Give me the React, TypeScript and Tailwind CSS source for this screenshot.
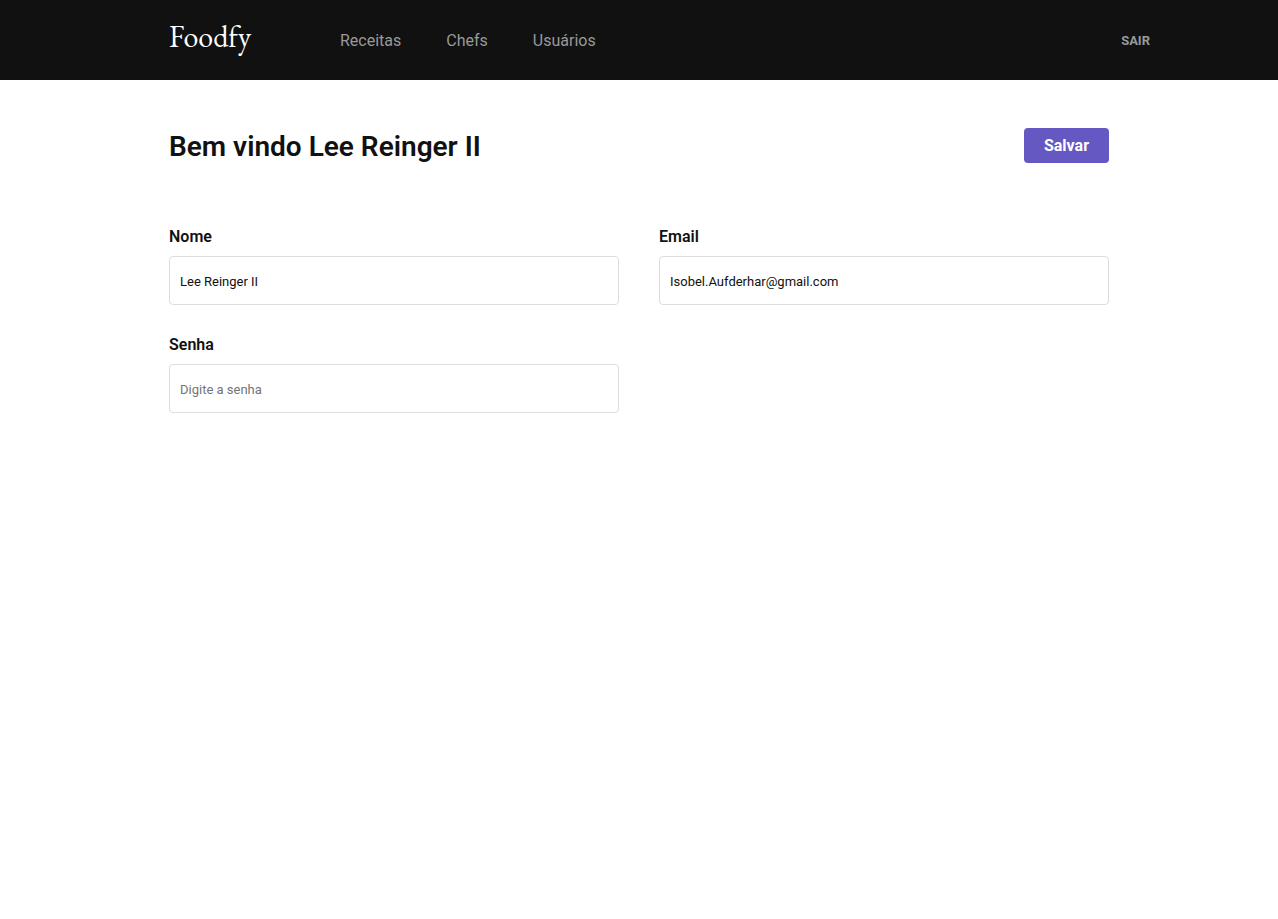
import React from "react";

type FieldProps = {
  id: string;
  label: string;
  type: string;
  value?: string;
  placeholder?: string;
};

function Field({ id, label, type, value, placeholder }: FieldProps) {
  return (
    <div className="flex flex-col gap-2.5">
      <label htmlFor={id} className="text-base leading-[19px] font-semibold">
        {label}
      </label>
      <input
        id={id}
        name={id}
        type={type}
        defaultValue={value}
        placeholder={placeholder}
        className="h-[49px] w-full rounded-[4px] border border-[#dddddd] bg-white px-2.5 pt-0.5 text-[13px] text-[#111111] placeholder:text-[#757575]"
      />
    </div>
  );
}

const links = ["Receitas", "Chefs", "Usuários"];

export default function App() {
  return (
    <div className="min-h-screen bg-white font-['Roboto',sans-serif] text-[#111111]">
      <header className="h-20 bg-[#111111]">
        <div className="mx-auto flex h-full max-w-[940px] items-center pt-0.5">
          <a href="#" className="mr-20 mb-2 w-[91px] font-['EB_Garamond','Liberation_Serif',serif] text-[30px] leading-9 text-white">
            Foodfy
          </a>
          <nav className="flex gap-[45px]">
            {links.map((link) => (
              <a key={link} href="#" className="text-base text-[#999999]">
                {link}
              </a>
            ))}
          </nav>
          <button type="button" className="-mr-[41px] ml-auto text-[13px] font-bold text-[#999999]">
            SAIR
          </button>
        </div>
      </header>
      <main className="mx-auto max-w-[940px] pt-12">
        <form onSubmit={(event) => event.preventDefault()}>
          <div className="flex items-start justify-between">
            <h1 className="text-[28px] leading-[37px] font-semibold">Bem vindo Lee Reinger II</h1>
            <button type="submit" className="h-[35px] rounded-[4px] bg-[#6558c3] px-5 text-base font-bold text-white">
              Salvar
            </button>
          </div>
          <div className="mt-[62px] grid grid-cols-2 gap-x-10 gap-y-[30px]">
            <Field id="name" label="Nome" type="text" value="Lee Reinger II" />
            <Field id="email" label="Email" type="email" value="Isobel.Aufderhar@gmail.com" />
            <Field id="password" label="Senha" type="password" placeholder="Digite a senha" />
          </div>
        </form>
      </main>
    </div>
  );
}
